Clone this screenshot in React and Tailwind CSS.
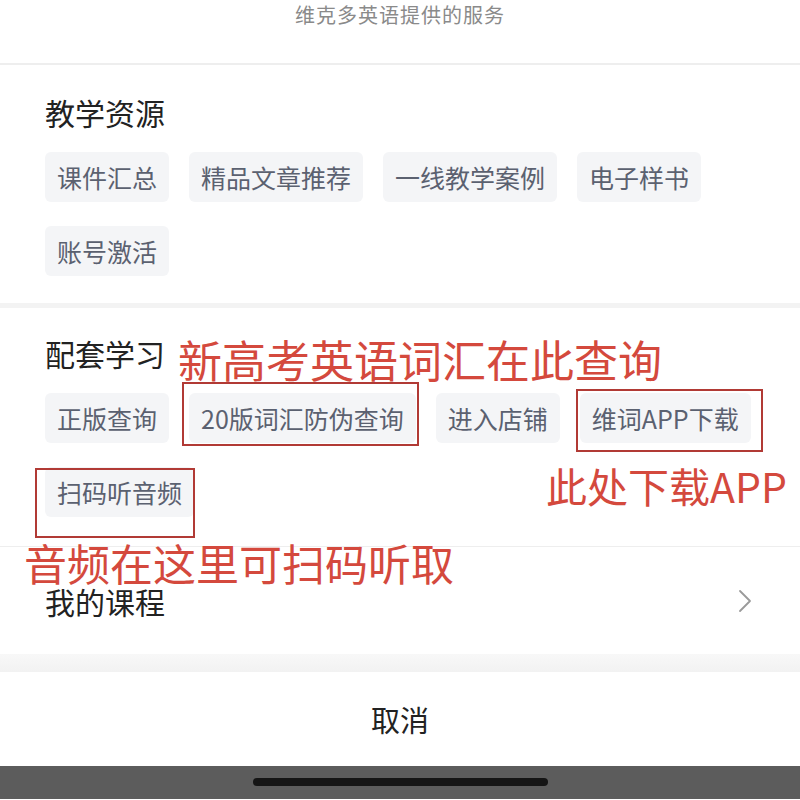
import React from 'react';

const teachItems = ['课件汇总', '精品文章推荐', '一线教学案例', '电子样书', '账号激活'];
const studyItems = ['正版查询', '20版词汇防伪查询', '进入店铺', '维词APP下载', '扫码听音频'];

const Chip = ({ label }) => (
  <div className="h-[50px] px-[12px] flex items-center rounded-[6px] bg-[#f4f5f7] text-[25px] leading-none text-[#5b6170]">
    {label}
  </div>
);

const Section = ({ title, items, pt, pb }) => (
  <div className={`px-[45px] ${pt} ${pb}`}>
    <div className="text-[30px] leading-[30px] text-[#222]">{title}</div>
    <div className="mt-[25px] flex flex-wrap gap-x-[20px] gap-y-[24px]">
      {items.map((it) => (
        <Chip key={it} label={it} />
      ))}
    </div>
  </div>
);

export default function App() {
  return (
    <div className="relative w-[800px] h-[800px] overflow-hidden bg-white font-['Noto_Sans_CJK_SC',sans-serif]">
      {/* sheet header */}
      <div className="h-[63px] flex justify-center pt-[3px]">
        <span className="text-[20px] leading-[24px] tracking-[1px] text-[#8a8a8a]">维克多英语提供的服务</span>
      </div>
      <div className="h-[2px] bg-[#eeeeee]" />

      <Section title="教学资源" items={teachItems} pt="pt-[32px]" pb="pb-[27px]" />
      <div className="h-[5px] bg-[#f3f3f3]" />
      <Section title="配套学习" items={studyItems} pt="pt-[30px]" pb="pb-[29px]" />
      <div className="h-[1px] bg-[#eeeeee]" />

      <div className="h-[107px] flex items-center justify-between pl-[45px] pr-[47px]">
        <span className="text-[30px] leading-none text-[#222]">我的课程</span>
        <svg width="16" height="24" viewBox="0 0 16 24" fill="none">
          <polyline points="3,2 13,12 3,22" stroke="#9a9a9a" strokeWidth="1.8" strokeLinecap="round" strokeLinejoin="round" />
        </svg>
      </div>

      <div className="h-[18px] bg-gradient-to-b from-[#f8f8f8] to-[#f2f2f2]" />

      <div className="h-[94px] flex items-center justify-center">
        <span className="text-[29px] leading-none text-[#222]">取消</span>
      </div>

      {/* home indicator */}
      <div className="h-[33px] bg-[#5c5c5c] flex justify-center pt-[12px]">
        <div className="w-[295px] h-[8px] rounded-full bg-[#151515]" />
      </div>

      {/* red annotations drawn over the screenshot */}
      <div className="absolute left-[178px] top-[337px] text-[44px] leading-none text-[#d4493d] whitespace-nowrap">
        新高考英语词汇在此查询
      </div>
      <div className="absolute left-[182px] top-[382px] w-[237px] h-[64px] border-2 border-[#b13a35]" />
      <div className="absolute left-[576px] top-[389px] w-[187px] h-[63px] border-2 border-[#b13a35]" />
      <div className="absolute left-[546px] top-[465px] text-[41px] leading-none text-[#d4493d] whitespace-nowrap">
        此处下载APP
      </div>
      <div className="absolute left-[35px] top-[468px] w-[160px] h-[70px] border-2 border-[#b13a35]" />
      <div className="absolute left-[24px] top-[541px] text-[43px] leading-none text-[#d4493d] whitespace-nowrap">
        音频在这里可扫码听取
      </div>
    </div>
  );
}
